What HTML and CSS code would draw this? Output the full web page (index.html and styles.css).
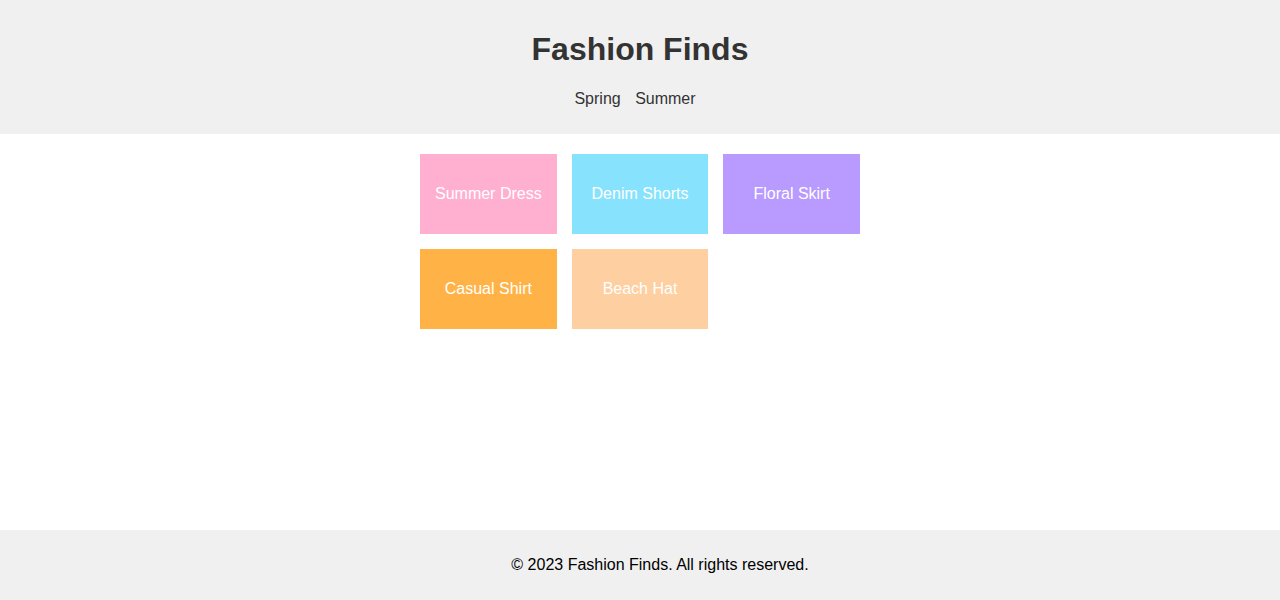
FILE: index.html
```html
<!DOCTYPE html>
<html lang="en">
<head>
<meta charset="utf-8">
<title>Fashion Finds</title>
<link rel="stylesheet" href="styles.css">
</head>
<body>
<div class="page">
  <header class="site-header">
    <h1 class="title">Fashion Finds</h1>
    <nav>
      <ul class="nav-list">
        <li class="nav-item"><a href="#" class="nav-link">Spring</a></li>
        <li class="nav-item"><a href="#" class="nav-link">Summer</a></li>
      </ul>
    </nav>
  </header>
  <main class="content">
    <div class="grid">
      <div class="tile tile-pink">Summer Dress</div>
      <div class="tile tile-cyan">Denim Shorts</div>
      <div class="tile tile-purple">Floral Skirt</div>
      <div class="tile tile-orange">Casual Shirt</div>
      <div class="tile tile-peach">Beach Hat</div>
    </div>
  </main>
  <footer class="site-footer">
    <p class="footer-text">&copy; 2023 Fashion Finds. All rights reserved.</p>
  </footer>
</div>
</body>
</html>
```
FILE: styles.css
```css
html, body {
  margin: 0;
  padding: 0;
}
body {
  font-family: "Liberation Sans", Arial, sans-serif;
  background: #ffffff;
  color: #333333;
}
.page {
  min-height: 100vh;
  display: flex;
  flex-direction: column;
}
.site-header {
  background: #f0f0f0;
  padding: 10px;
  text-align: center;
}
.title {
  font-size: 32px;
  font-weight: bold;
  margin: 21.44px 0;
  color: #333333;
}
.nav-list {
  list-style: none;
  margin: 16px 0;
  padding: 0;
  font-size: 16px;
}
.nav-item {
  display: inline-block;
  margin-right: 10px;
}
.nav-link {
  color: #333333;
  text-decoration: none;
}
.content {
  flex: 1;
  padding: 20px;
}
.grid {
  width: 440px;
  margin: 0 auto;
  display: grid;
  grid-template-columns: repeat(3, 1fr);
  gap: 15px;
}
.tile {
  height: 80px;
  display: flex;
  align-items: center;
  justify-content: center;
  color: #ffffff;
  font-size: 16px;
}
.tile-pink { background: #ffafcf; }
.tile-cyan { background: #87e2fe; }
.tile-purple { background: #b99aff; }
.tile-orange { background: #ffb347; }
.tile-peach { background: #fecfa0; }
.site-footer {
  background: #f0f0f0;
  padding: 10px 0 10px 40px;
  text-align: center;
}
.footer-text {
  margin: 16px 0;
  font-size: 16px;
  color: #000000;
}
```
